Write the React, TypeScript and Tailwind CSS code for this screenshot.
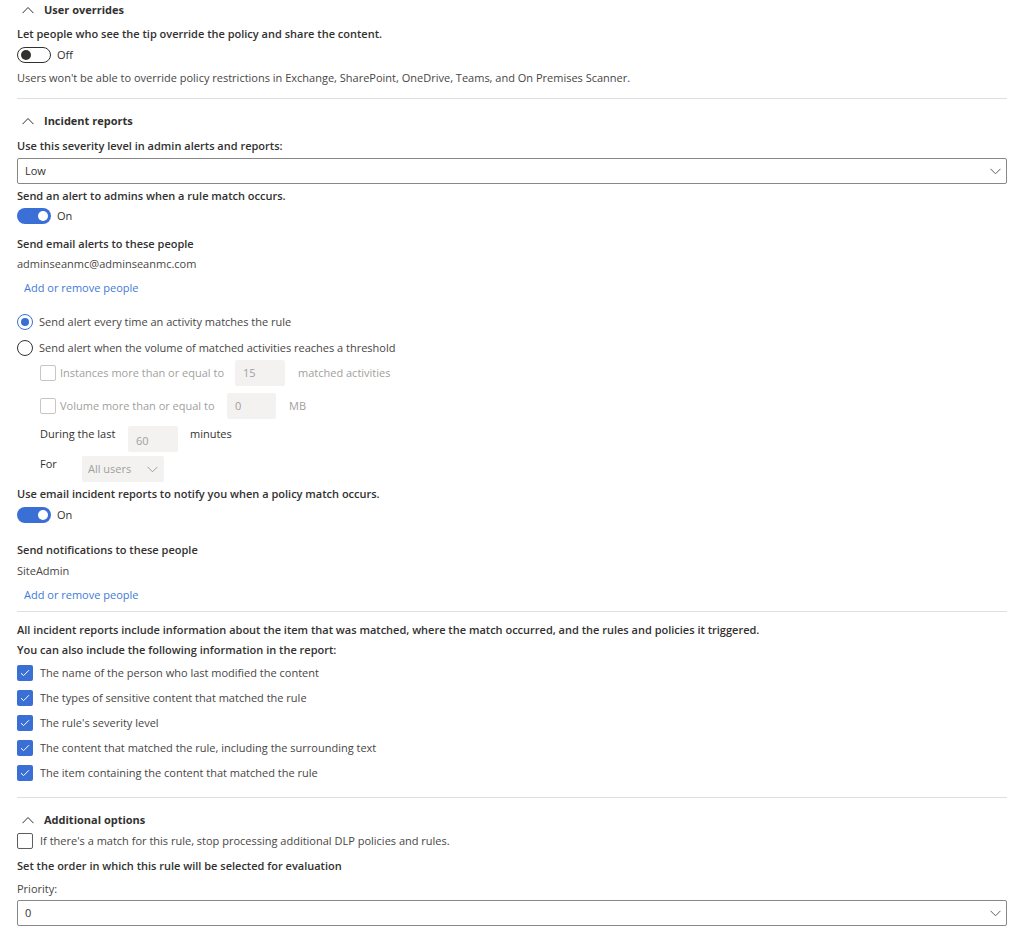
import React from "react";

const font = { fontFamily: '"Open Sans", "Noto Sans", sans-serif' };

const ChevronUp = () => (
  <svg width="12" height="8" viewBox="0 0 12 8" fill="none" className="shrink-0">
    <path d="M0.5 7.2 L6 1.5 L11.5 7.2" stroke="#323130" strokeWidth="1" />
  </svg>
);

const ChevronDown = ({ color = "#605e5c" }: { color?: string }) => (
  <svg width="11" height="7" viewBox="0 0 11 7" fill="none" className="shrink-0">
    <path d="M0.5 0.8 L5.5 5.8 L10.5 0.8" stroke={color} strokeWidth="1" />
  </svg>
);

const SectionHeader = ({ title }: { title: string }) => (
  <div className="flex items-center h-4 pl-[5px] gap-[10px]">
    <ChevronUp />
    <span className="font-bold text-[#323130]">{title}</span>
  </div>
);

const Toggle = ({ on }: { on: boolean }) => (
  <div className="flex items-center h-4 gap-[6px]">
    {on ? (
      <div className="w-[34px] h-4 rounded-full bg-[#3a6fd5] flex items-center justify-end pr-[3px]">
        <div className="w-[10px] h-[10px] rounded-full bg-white" />
      </div>
    ) : (
      <div className="w-[34px] h-4 rounded-full border border-[#323130] bg-white flex items-center pl-[3px]">
        <div className="w-[10px] h-[10px] rounded-full bg-[#323130]" />
      </div>
    )}
    <span className="text-[#323130]">{on ? "On" : "Off"}</span>
  </div>
);

const Select = ({ value }: { value: string }) => (
  <div className="h-[26px] border border-[#8a8886] rounded-[2px] flex items-center justify-between pl-[7px] pr-[5px]">
    <span className="text-[#323130]">{value}</span>
    <ChevronDown />
  </div>
);

const CheckBox = ({ checked, disabled }: { checked?: boolean; disabled?: boolean }) =>
  checked ? (
    <div className="w-4 h-4 rounded-[2px] bg-[#3a6fd5] flex items-center justify-center shrink-0">
      <svg width="10" height="8" viewBox="0 0 10 8" fill="none">
        <path d="M1 4.2 L3.6 6.6 L9 1.2" stroke="white" strokeWidth="1" />
      </svg>
    </div>
  ) : (
    <div
      className={`w-4 h-4 rounded-[2px] border bg-white shrink-0 ${
        disabled ? "border-[#c8c6c4]" : "border-[#605e5c]"
      }`}
    />
  );

const Radio = ({ checked }: { checked?: boolean }) => (
  <div
    className={`w-4 h-4 rounded-full border flex items-center justify-center shrink-0 ${
      checked ? "border-[#3a6fd5]" : "border-[#323130]"
    }`}
  >
    {checked && <div className="w-2 h-2 rounded-full bg-[#3a6fd5]" />}
  </div>
);

const Divider = ({ className = "" }: { className?: string }) => (
  <div className={`h-px bg-[#e1dfdd] ${className}`} />
);

const DisabledInput = ({ value, width, alignTop }: { value: string; width: string; alignTop?: boolean }) => (
  <div
    className={`h-[26px] bg-[#f3f2f1] rounded-[2px] flex px-[8px] text-[#a19f9d] ${width} ${
      alignTop ? "items-end pb-[3px]" : "items-center"
    }`}
  >
    {value}
  </div>
);

export default function App() {
  const reportItems = [
    "The name of the person who last modified the content",
    "The types of sensitive content that matched the rule",
    "The rule's severity level",
    "The content that matched the rule, including the surrounding text",
    "The item containing the content that matched the rule",
  ];

  return (
    <div className="w-[1024px] h-[930px] bg-white px-[17px] pt-[2px] text-[11px] leading-4 text-[#323130] overflow-hidden" style={font}>
      {/* User overrides */}
      <SectionHeader title="User overrides" />
      <div className="mt-2 font-semibold">Let people who see the tip override the policy and share the content.</div>
      <div className="mt-[5px]">
        <Toggle on={false} />
      </div>
      <div className="mt-[7px] text-[#484644]">
        Users won't be able to override policy restrictions in Exchange, SharePoint, OneDrive, Teams, and On Premises Scanner.
      </div>
      <Divider className="mt-3" />

      {/* Incident reports */}
      <div className="mt-[14px]">
        <SectionHeader title="Incident reports" />
      </div>
      <div className="mt-[9px] font-semibold">Use this severity level in admin alerts and reports:</div>
      <div className="mt-1">
        <Select value="Low" />
      </div>
      <div className="mt-1 font-semibold">Send an alert to admins when a rule match occurs.</div>
      <div className="mt-1">
        <Toggle on />
      </div>
      <div className="mt-3 font-semibold">Send email alerts to these people</div>
      <div className="mt-1 text-[#484644]">adminseanmc@adminseanmc.com</div>
      <div className="mt-2 pl-[7px] text-[#3f7ad8]">Add or remove people</div>

      <div className="mt-[18px] flex flex-col gap-[10px]">
        <div className="flex items-center gap-[6px] h-4">
          <Radio checked />
          <span className="text-[#484644]">Send alert every time an activity matches the rule</span>
        </div>
        <div className="flex items-center gap-[6px] h-4">
          <Radio />
          <span className="text-[#484644]">Send alert when the volume of matched activities reaches a threshold</span>
        </div>
      </div>

      <div className="mt-[4px] pl-[23px] flex flex-col">
        <div className="flex items-center h-[26px]">
          <CheckBox disabled />
          <span className="ml-[4px] w-[175px] text-[#a19f9d]">Instances more than or equal to</span>
          <DisabledInput value="15" width="w-[50px]" />
          <span className="ml-[13px] text-[#a19f9d]">matched activities</span>
        </div>
        <div className="flex items-center h-[26px] mt-[7px]">
          <CheckBox disabled />
          <span className="ml-[4px] w-[167px] text-[#a19f9d]">Volume more than or equal to</span>
          <DisabledInput value="0" width="w-[49px]" />
          <span className="ml-[13px] text-[#a19f9d]">MB</span>
        </div>
        <div className="flex items-start h-[26px] mt-[7px]">
          <span className="w-[88px]">During the last</span>
          <DisabledInput value="60" width="w-[50px]" alignTop />
          <span className="ml-[12px]">minutes</span>
        </div>
        <div className="flex items-start h-[26px] mt-[4px]">
          <span className="w-[42px]">For</span>
          <div className="h-[26px] w-[82px] bg-[#f3f2f1] rounded-[2px] flex items-center justify-between pl-[6px] pr-[6px] text-[#a19f9d]">
            <span>All users</span>
            <ChevronDown color="#a19f9d" />
          </div>
        </div>
      </div>

      <div className="mt-1 font-semibold">Use email incident reports to notify you when a policy match occurs.</div>
      <div className="mt-[5px]">
        <Toggle on />
      </div>
      <div className="mt-[19px] font-semibold">Send notifications to these people</div>
      <div className="mt-[5px] text-[#484644]">SiteAdmin</div>
      <div className="mt-2 pl-[7px] text-[#3f7ad8]">Add or remove people</div>
      <Divider className="mt-2" />

      <div className="mt-[10px] font-semibold">
        All incident reports include information about the item that was matched, where the match occurred, and the rules and policies it triggered.
      </div>
      <div className="mt-1 font-semibold">You can also include the following information in the report:</div>
      <div className="mt-[7px] flex flex-col gap-[9px]">
        {reportItems.map((item) => (
          <div key={item} className="flex items-center gap-[7px] h-4">
            <CheckBox checked />
            <span className="text-[#484644]">{item}</span>
          </div>
        ))}
      </div>
      <Divider className="mt-4" />

      {/* Additional options */}
      <div className="mt-[14px]">
        <SectionHeader title="Additional options" />
      </div>
      <div className="mt-[5px] flex items-center gap-[7px] h-4">
        <CheckBox />
        <span className="text-[#484644]">If there's a match for this rule, stop processing additional DLP policies and rules.</span>
      </div>
      <div className="mt-[9px] font-semibold">Set the order in which this rule will be selected for evaluation</div>
      <div className="mt-[7px] text-[#484644]">Priority:</div>
      <div className="mt-[3px]">
        <Select value="0" />
      </div>
    </div>
  );
}
